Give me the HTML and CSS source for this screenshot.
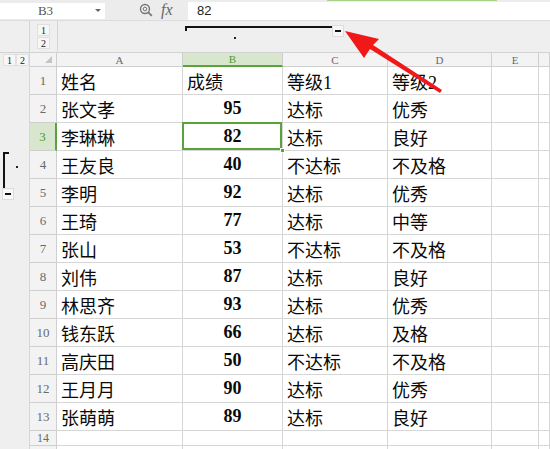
FILE: index.html
```html
<!DOCTYPE html>
<html>
<head>
<meta charset="utf-8">
<link rel="stylesheet" href="styles.css">
</head>
<body>
<div class="page">
  <div class="fbar">
    <div class="namebox"><span class="nb-text">B3</span><span class="nb-arrow"></span></div>
    <div class="fb-icons">
      <svg class="ico-zoom" width="14" height="14" viewBox="0 0 14 14"><circle cx="6" cy="6" r="4.5" fill="none" stroke="#777" stroke-width="1.4"/><circle cx="6" cy="6" r="1.8" fill="none" stroke="#777" stroke-width="1"/><line x1="9.3" y1="9.3" x2="12.8" y2="12.8" stroke="#777" stroke-width="1.8"/></svg>
      <span class="fx">fx</span>
    </div>
    <div class="finput">82</div>
    <div class="tabline"></div>
  </div>

  <div class="otop">
    <div class="ot-blank"></div>
    <div class="ot-levels"><span class="lvl">1</span><span class="lvl">2</span></div>
    <div class="ot-canvas">
      <div class="cbracket"></div>
      <div class="cdot"></div>
      <div class="cbtn"><span class="minus"></span></div>
    </div>
  </div>

  <div class="sheet">
    <div class="oleft">
      <div class="ol-levels"><span class="lvl">1</span><span class="lvl">2</span></div>
      <div class="ol-canvas">
        <div class="rbracket"></div>
        <div class="rdot"></div>
        <div class="rbtn"><span class="minus"></span></div>
      </div>
    </div>
    <div class="grid">
      <div class="hd corner"><span class="tri"></span></div>
      <div class="hd ch">A</div>
      <div class="hd ch chsel">B</div>
      <div class="hd ch">C</div>
      <div class="hd ch">D</div>
      <div class="hd ch">E</div>
      <div class="hd ch"></div>

      <div class="hd rh">1</div><div class="c">姓名</div><div class="c">成绩</div><div class="c">等级1</div><div class="c">等级2</div><div class="c"></div><div class="c"></div>
      <div class="hd rh">2</div><div class="c">张文孝</div><div class="c n">95</div><div class="c">达标</div><div class="c">优秀</div><div class="c"></div><div class="c"></div>
      <div class="hd rh rhsel">3</div><div class="c">李琳琳</div><div class="c n sel">82<span class="handle"></span></div><div class="c">达标</div><div class="c">良好</div><div class="c"></div><div class="c"></div>
      <div class="hd rh">4</div><div class="c">王友良</div><div class="c n">40</div><div class="c">不达标</div><div class="c">不及格</div><div class="c"></div><div class="c"></div>
      <div class="hd rh">5</div><div class="c">李明</div><div class="c n">92</div><div class="c">达标</div><div class="c">优秀</div><div class="c"></div><div class="c"></div>
      <div class="hd rh">6</div><div class="c">王琦</div><div class="c n">77</div><div class="c">达标</div><div class="c">中等</div><div class="c"></div><div class="c"></div>
      <div class="hd rh">7</div><div class="c">张山</div><div class="c n">53</div><div class="c">不达标</div><div class="c">不及格</div><div class="c"></div><div class="c"></div>
      <div class="hd rh">8</div><div class="c">刘伟</div><div class="c n">87</div><div class="c">达标</div><div class="c">良好</div><div class="c"></div><div class="c"></div>
      <div class="hd rh">9</div><div class="c">林思齐</div><div class="c n">93</div><div class="c">达标</div><div class="c">优秀</div><div class="c"></div><div class="c"></div>
      <div class="hd rh">10</div><div class="c">钱东跃</div><div class="c n">66</div><div class="c">达标</div><div class="c">及格</div><div class="c"></div><div class="c"></div>
      <div class="hd rh">11</div><div class="c">高庆田</div><div class="c n">50</div><div class="c">不达标</div><div class="c">不及格</div><div class="c"></div><div class="c"></div>
      <div class="hd rh">12</div><div class="c">王月月</div><div class="c n">90</div><div class="c">达标</div><div class="c">优秀</div><div class="c"></div><div class="c"></div>
      <div class="hd rh">13</div><div class="c">张萌萌</div><div class="c n">89</div><div class="c">达标</div><div class="c">良好</div><div class="c"></div><div class="c"></div>
      <div class="hd rh small">14</div><div class="c"></div><div class="c"></div><div class="c"></div><div class="c"></div><div class="c"></div><div class="c"></div>
      <div class="hd rh"></div><div class="c"></div><div class="c"></div><div class="c"></div><div class="c"></div><div class="c"></div><div class="c"></div>
    </div>
  </div>

  <svg class="arrow" width="550" height="449" viewBox="0 0 550 449">
    <polygon points="345,31 379,39 373,45 442,90 440,93 370,49 364,58" fill="#f01818"/>
  </svg>
</div>
</body>
</html>
```

FILE: styles.css
```css
* { box-sizing: border-box; }
html, body { margin: 0; padding: 0; }
body {
  width: 550px;
  height: 449px;
  overflow: hidden;
  background: #f0f0f0;
  font-family: "Liberation Serif", "Noto Sans CJK SC", serif;
}
.page { position: relative; width: 550px; height: 449px; overflow: hidden; }

/* formula bar */
.fbar {
  position: relative;
  height: 21px;
  display: flex;
  align-items: center;
  background: #ececec;
  border-bottom: 1px solid #dcdcdc;
}
.tabline {
  position: absolute;
  top: 0;
  left: 327px;
  width: 170px;
  height: 1px;
  background: #a9d18e;
}
.namebox {
  width: 105px;
  height: 16px;
  margin-top: 1px;
  background: #fff;
  display: flex;
  align-items: center;
  position: relative;
}
.nb-text {
  flex: 1;
  text-align: center;
  font-family: "Liberation Serif", serif;
  font-size: 13px;
  color: #555;
  padding-right: 4px;
}
.nb-arrow {
  width: 0; height: 0;
  border-left: 3px solid transparent;
  border-right: 3px solid transparent;
  border-top: 3px solid #666;
  margin-right: 4px;
}
.fb-icons {
  width: 83px;
  display: flex;
  align-items: center;
  padding-left: 34px;
  gap: 8px;
}
.ico-zoom { display: block; }
.fx {
  font-family: "Liberation Serif", serif;
  font-style: italic;
  font-size: 16px;
  color: #666;
  line-height: 16px;
}
.finput {
  flex: 1;
  height: 18px;
  margin-top: 2px;
  background: #fff;
  font-family: "Liberation Sans", sans-serif;
  font-size: 13px;
  color: #222;
  line-height: 18px;
  padding-left: 9px;
}

/* column outline area */
.otop {
  height: 32px;
  display: flex;
  background: #efefef;
  border-bottom: 1px solid #d2d2d2;
}
.ot-blank { width: 30px; border-right: 1px solid #d6d6d6; }
.ot-levels {
  width: 28px;
  border-right: 1px solid #d6d6d6;
  display: flex;
  flex-direction: column;
  align-items: flex-start;
  padding: 3px 0 0 7px;
  gap: 1px;
}
.lvl {
  display: flex;
  align-items: center;
  justify-content: center;
  width: 13px;
  height: 12px;
  background: #f7f7f7;
  border: 1px solid #e0e0e0;
  font-family: "Liberation Serif", serif;
  font-size: 10px;
  color: #222;
}
.ot-canvas { flex: 1; position: relative; }
.cbracket {
  position: absolute;
  left: 127px;
  top: 5px;
  width: 147px;
  height: 5px;
  border-top: 2px solid #111;
  border-left: 2px solid #111;
}
.cdot {
  position: absolute;
  left: 176px;
  top: 16px;
  width: 2px;
  height: 2px;
  background: #222;
}
.cbtn, .rbtn {
  position: absolute;
  width: 12px;
  height: 12px;
  background: #f7f7f7;
  border: 1px solid #dcdcdc;
  display: flex;
  align-items: center;
  justify-content: center;
}
.cbtn { left: 274px; top: 4px; }
.minus { width: 6px; height: 2px; background: #111; }

/* sheet */
.sheet { display: flex; }
.oleft {
  width: 30px;
  display: flex;
  flex-direction: column;
  background: #efefef;
  border-right: 1px solid #d6d6d6;
}
.ol-levels {
  height: 14px;
  display: flex;
  gap: 0;
  padding: 1px 0 0 3px;
}
.ol-levels .lvl { height: 12px; }
.ol-canvas { flex: 1; position: relative; }
.rbracket {
  position: absolute;
  left: 3px;
  top: 85px;
  width: 6px;
  height: 36px;
  border-top: 2px solid #111;
  border-left: 2px solid #111;
}
.rdot {
  position: absolute;
  left: 16px;
  top: 99px;
  width: 2px;
  height: 2px;
  background: #222;
}
.rbtn { left: 2px; top: 121px; }

.grid {
  flex: 1;
  display: grid;
  grid-template-columns: 27px 126px 100px 105px 104px 47px 11px;
  grid-template-rows: 14px repeat(13, 28px) 15px 28px;
  background: #fff;
}
.hd {
  background: #f3f3f3;
  border-right: 1px solid #cfcfcf;
  border-bottom: 1px solid #cfcfcf;
  color: #6a6a6a;
  font-family: "Liberation Serif", serif;
  display: flex;
  align-items: center;
  justify-content: center;
}
.corner { position: relative; }
.tri {
  position: absolute;
  right: 4px;
  bottom: 3px;
  width: 0; height: 0;
  border-left: 7px solid transparent;
  border-bottom: 7px solid #c4c4c4;
}
.ch { font-size: 11px; }
.chsel {
  background: #d8e6cd;
  color: #4f9a2e;
  border-bottom: 2px solid #5aa33a;
}
.rh { font-size: 13px; }
.rh.small { font-size: 12px; }
.rhsel {
  background: #d8e6cd;
  color: #4f9a2e;
  border-right: 2px solid #5aa33a;
}
.c {
  border-right: 1px solid #d6d6d6;
  border-bottom: 1px solid #d6d6d6;
  font-size: 18px;
  color: #0a0a0a;
  display: flex;
  align-items: center;
  padding-left: 4px;
  white-space: nowrap;
  overflow: hidden;
}
.n {
  justify-content: center;
  padding-left: 0;
  font-weight: bold;
  font-size: 18px;
}
.sel { position: relative; overflow: visible; }
.sel::after {
  content: "";
  position: absolute;
  left: -1px;
  top: -1px;
  right: 0;
  bottom: 0;
  border: 2px solid #5aa33a;
}
.handle {
  position: absolute;
  right: -3px;
  bottom: -3px;
  width: 5px;
  height: 5px;
  background: #5aa33a;
  border: 1px solid #fff;
  z-index: 2;
}

.arrow { position: absolute; left: 0; top: 0; pointer-events: none; }
```
